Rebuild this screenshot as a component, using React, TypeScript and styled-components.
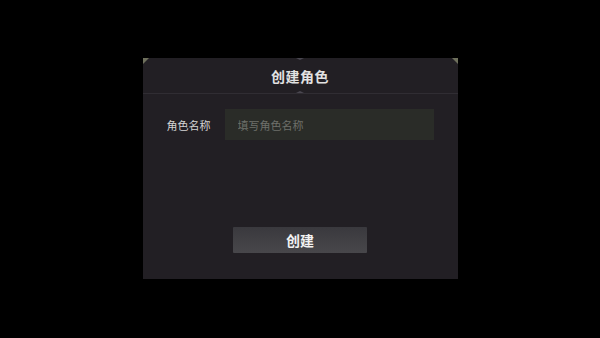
import React from 'react';
import styled, { createGlobalStyle } from 'styled-components';

const GlobalStyle = createGlobalStyle`
  html, body {
    margin: 0;
    padding: 0;
    background: #000;
    font-family: "Noto Sans CJK SC", "Noto Sans", sans-serif;
  }
`;

const Screen = styled.div`
  width: 600px;
  height: 338px;
  display: flex;
  justify-content: center;
  padding-top: 58px;
  box-sizing: border-box;
`;

const Panel = styled.section`
  position: relative;
  width: 315px;
  height: 221px;
  background: #221f24;
  display: flex;
  flex-direction: column;
`;

const Corner = styled.span<{ side: 'left' | 'right' }>`
  position: absolute;
  top: 0;
  ${(p) => (p.side === 'left' ? 'left: 0;' : 'right: 0;')}
  width: 0;
  height: 0;
  border-top: 6px solid #6e705c;
  ${(p) =>
    p.side === 'left'
      ? 'border-right: 6px solid transparent;'
      : 'border-left: 6px solid transparent;'}
`;

const Header = styled.header`
  position: relative;
  height: 35px;
  display: flex;
  align-items: center;
  justify-content: center;
  border-bottom: 1px solid #302d33;
`;

const Notch = styled.span<{ pos: 'top' | 'bottom' }>`
  position: absolute;
  left: 50%;
  margin-left: -4px;
  width: 0;
  height: 0;
  border-left: 4px solid transparent;
  border-right: 4px solid transparent;
  ${(p) =>
    p.pos === 'top'
      ? 'top: 0; border-top: 2px solid #4a4750;'
      : 'bottom: 0; border-bottom: 2px solid #4a4750;'}
`;

const Title = styled.h1`
  margin: 0 0 -1px;
  font-size: 14px;
  font-weight: 700;
  color: #e2e2e2;
  letter-spacing: 0.5px;
`;

const Body = styled.div`
  flex: 1;
  display: flex;
  flex-direction: column;
  align-items: center;
  padding: 15px 24px 0;
`;

const Row = styled.div`
  width: 100%;
  display: flex;
  align-items: center;
`;

const Label = styled.label`
  width: 58px;
  flex-shrink: 0;
  font-size: 11px;
  color: #d4d4d4;
`;

const Input = styled.input`
  width: 209px;
  height: 31px;
  box-sizing: border-box;
  border: none;
  outline: none;
  background: #2a2c28;
  padding: 0 13px;
  font-family: inherit;
  font-size: 11px;
  color: #ddd;

  &::placeholder {
    color: #6e706b;
  }
`;

const Button = styled.button`
  margin-top: 87px;
  width: 134px;
  height: 26px;
  border: none;
  border-radius: 1px;
  background: linear-gradient(#3a393e, #48474b);
  font-family: inherit;
  font-size: 14px;
  font-weight: 700;
  color: #f2f2f2;
  cursor: pointer;
`;

export default function App() {
  return (
    <>
      <GlobalStyle />
      <Screen>
        <Panel>
          <Corner side="left" />
          <Corner side="right" />
          <Header>
            <Notch pos="top" />
            <Title>创建角色</Title>
            <Notch pos="bottom" />
          </Header>
          <Body>
            <Row>
              <Label htmlFor="roleName">角色名称</Label>
              <Input id="roleName" placeholder="填写角色名称" />
            </Row>
            <Button>创建</Button>
          </Body>
        </Panel>
      </Screen>
    </>
  );
}
